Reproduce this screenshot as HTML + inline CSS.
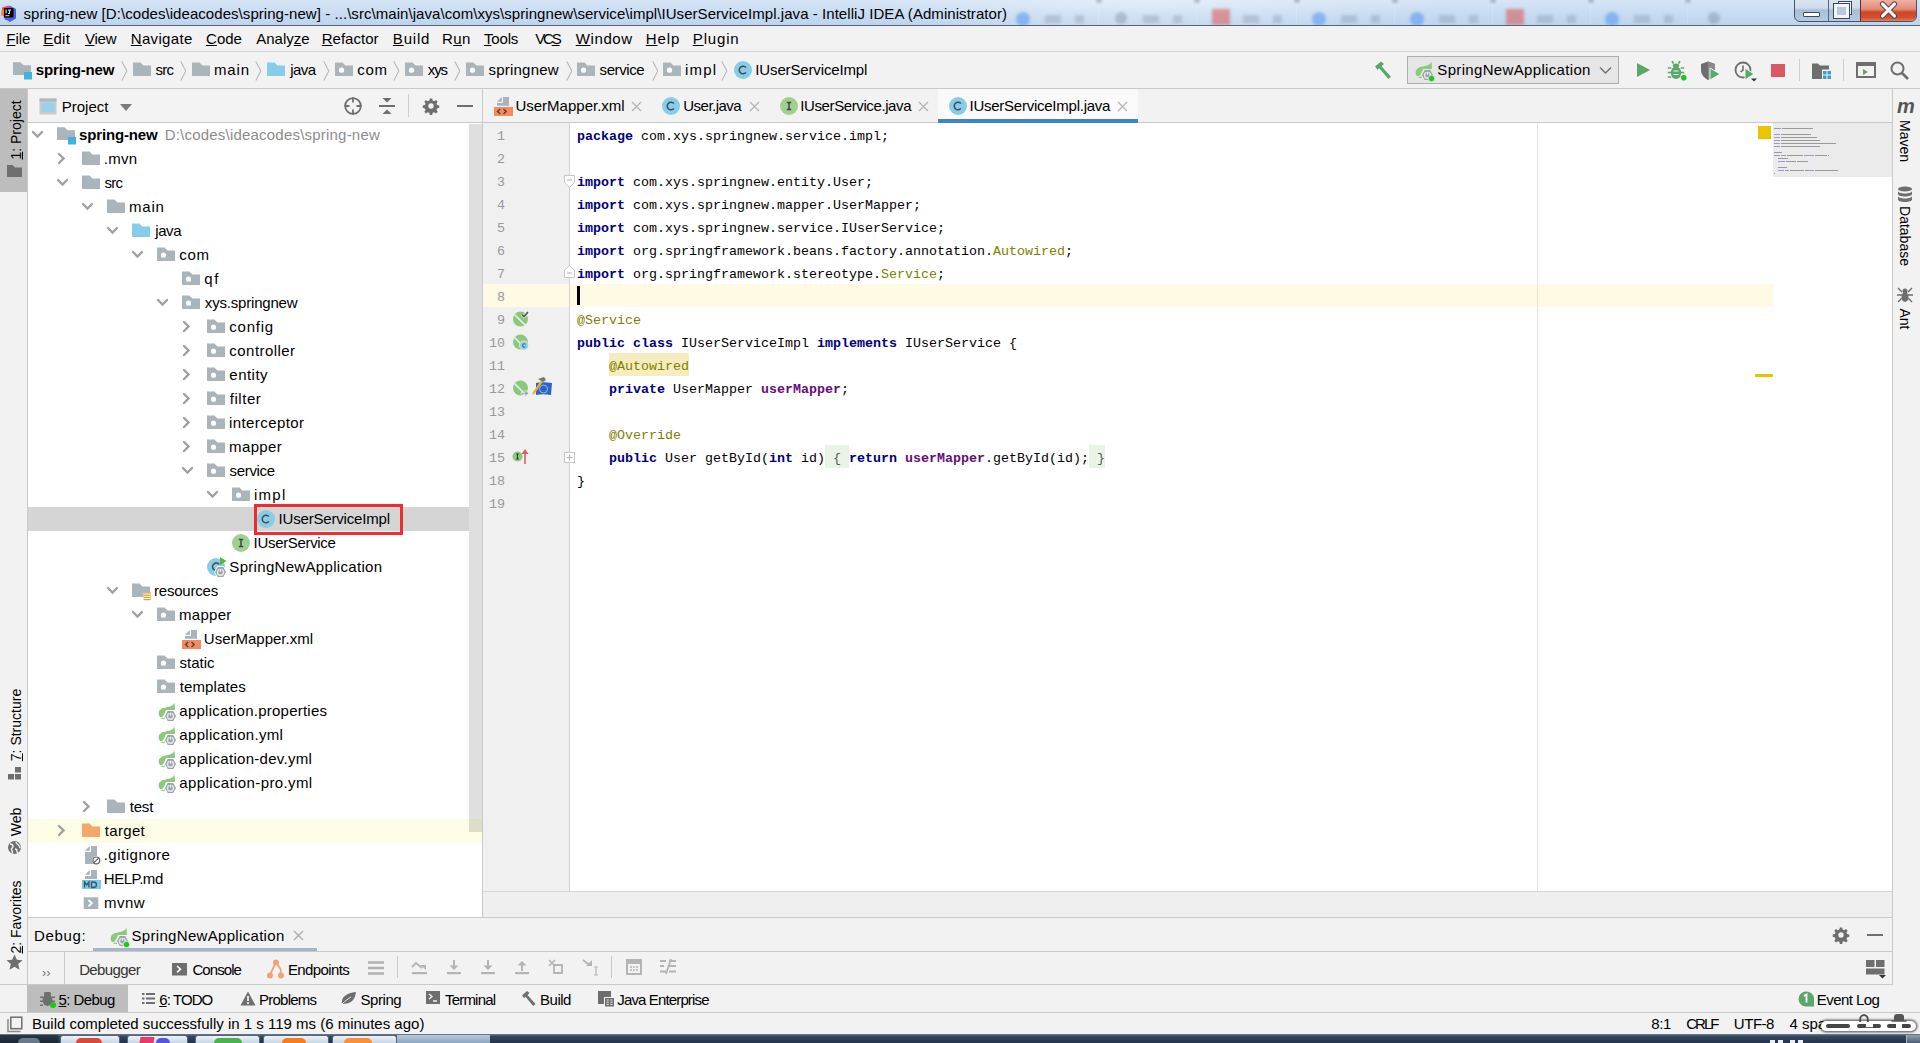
<!DOCTYPE html>
<html><head><meta charset="utf-8">
<style>
*{margin:0;padding:0;box-sizing:border-box}
html,body{width:1920px;height:1043px;overflow:hidden;background:#f2f2f2;font-family:"Liberation Sans",sans-serif;font-size:15px;color:#000;position:relative}
.a{position:absolute}
.t{position:absolute;white-space:pre;line-height:15px}
u{text-decoration:underline;text-underline-offset:1px}
.code{font-family:"Liberation Mono",monospace;font-size:13.34px;color:#000}
.kw{color:#000080;font-weight:bold}
.an{color:#808000}
.fd{color:#660e7a;font-weight:bold}
.ln{color:#999;font-family:"Liberation Mono",monospace;font-size:13.34px}
svg{overflow:visible}
</style></head><body>
<div class="a" style="left:0px;top:0px;width:1920px;height:25px;background:linear-gradient(180deg,#d6e5f6 0%,#c9dcf2 50%,#bed4ee 100%);"></div>
<div class="a" style="left:0px;top:0px;width:1920px;height:25px;background:radial-gradient(ellipse 300px 40px at 1150px 0px, rgba(255,255,255,0.35), rgba(255,255,255,0));"></div>
<div class="a" style="left:1016px;top:12px;width:14px;height:14px;background:rgba(80,150,240,0.55);border-radius:7px;filter:blur(1.5px)"></div>
<div class="a" style="left:1045px;top:15px;width:16px;height:8px;background:rgba(110,125,145,0.28);filter:blur(1.5px)"></div>
<div class="a" style="left:1075px;top:15px;width:9px;height:8px;background:rgba(110,125,145,0.28);filter:blur(1.5px)"></div>
<div class="a" style="left:1098px;top:0px;width:1px;height:25px;background:rgba(255,255,255,0.15);"></div>
<div class="a" style="left:1096px;top:-2px;width:6px;height:5px;background:rgba(90,100,120,0.35);border-radius:3px;filter:blur(1px)"></div>
<div class="a" style="left:1115px;top:12px;width:12px;height:12px;background:rgba(110,120,135,0.35);border-radius:6px;filter:blur(1.5px)"></div>
<div class="a" style="left:1143px;top:15px;width:16px;height:8px;background:rgba(110,125,145,0.28);filter:blur(1.5px)"></div>
<div class="a" style="left:1173px;top:15px;width:9px;height:8px;background:rgba(110,125,145,0.28);filter:blur(1.5px)"></div>
<div class="a" style="left:1196px;top:0px;width:1px;height:25px;background:rgba(255,255,255,0.15);"></div>
<div class="a" style="left:1194px;top:-2px;width:6px;height:5px;background:rgba(90,100,120,0.35);border-radius:3px;filter:blur(1px)"></div>
<div class="a" style="left:1212px;top:9px;width:18px;height:16px;background:rgba(215,95,95,0.6);filter:blur(1.5px)"></div>
<div class="a" style="left:1243px;top:15px;width:16px;height:8px;background:rgba(110,125,145,0.28);filter:blur(1.5px)"></div>
<div class="a" style="left:1273px;top:15px;width:9px;height:8px;background:rgba(110,125,145,0.28);filter:blur(1.5px)"></div>
<div class="a" style="left:1296px;top:0px;width:1px;height:25px;background:rgba(255,255,255,0.15);"></div>
<div class="a" style="left:1294px;top:-2px;width:6px;height:5px;background:rgba(90,100,120,0.35);border-radius:3px;filter:blur(1px)"></div>
<div class="a" style="left:1312px;top:12px;width:14px;height:14px;background:rgba(80,150,240,0.55);border-radius:7px;filter:blur(1.5px)"></div>
<div class="a" style="left:1341px;top:15px;width:16px;height:8px;background:rgba(110,125,145,0.28);filter:blur(1.5px)"></div>
<div class="a" style="left:1371px;top:15px;width:9px;height:8px;background:rgba(110,125,145,0.28);filter:blur(1.5px)"></div>
<div class="a" style="left:1394px;top:0px;width:1px;height:25px;background:rgba(255,255,255,0.15);"></div>
<div class="a" style="left:1392px;top:-2px;width:6px;height:5px;background:rgba(90,100,120,0.35);border-radius:3px;filter:blur(1px)"></div>
<div class="a" style="left:1410px;top:12px;width:14px;height:14px;background:rgba(80,150,240,0.55);border-radius:7px;filter:blur(1.5px)"></div>
<div class="a" style="left:1439px;top:15px;width:16px;height:8px;background:rgba(110,125,145,0.28);filter:blur(1.5px)"></div>
<div class="a" style="left:1469px;top:15px;width:9px;height:8px;background:rgba(110,125,145,0.28);filter:blur(1.5px)"></div>
<div class="a" style="left:1492px;top:0px;width:1px;height:25px;background:rgba(255,255,255,0.15);"></div>
<div class="a" style="left:1490px;top:-2px;width:6px;height:5px;background:rgba(90,100,120,0.35);border-radius:3px;filter:blur(1px)"></div>
<div class="a" style="left:1506px;top:9px;width:18px;height:16px;background:rgba(215,95,95,0.6);filter:blur(1.5px)"></div>
<div class="a" style="left:1537px;top:15px;width:16px;height:8px;background:rgba(110,125,145,0.28);filter:blur(1.5px)"></div>
<div class="a" style="left:1567px;top:15px;width:9px;height:8px;background:rgba(110,125,145,0.28);filter:blur(1.5px)"></div>
<div class="a" style="left:1590px;top:0px;width:1px;height:25px;background:rgba(255,255,255,0.15);"></div>
<div class="a" style="left:1588px;top:-2px;width:6px;height:5px;background:rgba(90,100,120,0.35);border-radius:3px;filter:blur(1px)"></div>
<div class="a" style="left:1605px;top:12px;width:14px;height:14px;background:rgba(80,150,240,0.55);border-radius:7px;filter:blur(1.5px)"></div>
<div class="a" style="left:1634px;top:15px;width:16px;height:8px;background:rgba(110,125,145,0.28);filter:blur(1.5px)"></div>
<div class="a" style="left:1664px;top:15px;width:9px;height:8px;background:rgba(110,125,145,0.28);filter:blur(1.5px)"></div>
<div class="a" style="left:1687px;top:0px;width:1px;height:25px;background:rgba(255,255,255,0.15);"></div>
<div class="a" style="left:1685px;top:-2px;width:6px;height:5px;background:rgba(90,100,120,0.35);border-radius:3px;filter:blur(1px)"></div>
<div class="a" style="left:1708px;top:12px;width:12px;height:12px;background:rgba(110,120,135,0.35);border-radius:6px;filter:blur(1.5px)"></div>
<div class="a" style="left:0px;top:25px;width:1920px;height:1px;background:#56667a;"></div>
<svg class="a" style="left:0px;top:4px" width="18" height="18" viewBox="0 0 18 18" ><path d="M2 3.5L8.5 1.5 10.5 7H2z" fill="#fe3f62"/><path d="M1.2 6.5H5v5H1.2z" fill="#f98a2a"/><path d="M2.5 10l8 5.5-5.5 0.5z" fill="#c24ae0"/><path d="M9.5 1.5l6.5 3.5v9.5l-6 3.5-5-3z" fill="#4e62e6"/><rect x="4" y="4" width="9.5" height="9.5" fill="#000"/><path d="M5.5 5.5h1.2v4h-1.2zM8 5.5h3v1.2h-1v3.2h-2v-1h1v-2.2h-1z" fill="#d0d0d0"/><rect x="5.3" y="11.2" width="4" height="1" fill="#ddd"/></svg>
<div class="t" style="left:23.48px;top:6px;letter-spacing:0.056px">spring-new [D:\codes\ideacodes\spring-new] - ...\src\main\java\com\xys\springnew\service\impl\IUserServiceImpl.java - IntelliJ IDEA (Administrator)</div>
<div class="a" style="left:1794px;top:-2px;width:123px;height:24px;border:1px solid #45546a;border-radius:0 0 6px 6px;overflow:hidden;background:linear-gradient(#dae5f2 0%,#cfdcec 40%,#a9bdd6 52%,#b9cbe0 100%)"><div class="a" style="left:33px;top:0;width:1px;height:24px;background:#55657a"></div><div class="a" style="left:65px;top:0;width:57px;height:24px;background:linear-gradient(#f0b3a8 0%,#e48c79 42%,#cf4526 55%,#d4512f 78%,#e9977f 100%);border-left:1px solid #6b2a1e"></div></div>
<div class="a" style="left:1803px;top:12px;width:17px;height:5px;background:#fff;border:1px solid #3a4a5e;border-radius:1px"></div>
<div class="a" style="left:1838px;top:1px;width:14px;height:14px;background:transparent;border:3px solid #f4f4f4;outline:1px solid #3a4a5e;outline-offset:-1px"></div>
<div class="a" style="left:1834px;top:4px;width:15px;height:14px;background:#b9c9dc;border:3px solid #f4f4f4;box-shadow:0 0 0 1px #3a4a5e"></div>
<svg class="a" style="left:1880px;top:2px" width="17" height="16" viewBox="0 0 17 16" ><path d="M2.5 2l12 12M14.5 2l-12 12" stroke="#45383a" stroke-width="5.2" stroke-linecap="round"/><path d="M2.5 2l12 12M14.5 2l-12 12" stroke="#f2f2f2" stroke-width="3.2" stroke-linecap="round"/></svg>
<div class="a" style="left:0px;top:26px;width:1920px;height:25px;background:#f2f2f2;"></div>
<div class="a" style="left:0px;top:51px;width:1920px;height:1px;background:#d6d6d6;"></div>
<div class="t" style="left:6.27px;top:31px"><u>F</u>ile</div>
<div class="t" style="left:43.27px;top:31px;letter-spacing:0.231px"><u>E</u>dit</div>
<div class="t" style="left:84.93px;top:31px;letter-spacing:-0.228px"><u>V</u>iew</div>
<div class="t" style="left:130.77px;top:31px;letter-spacing:0.328px"><u>N</u>avigate</div>
<div class="t" style="left:206.04px;top:31px"><u>C</u>ode</div>
<div class="t" style="left:256.27px;top:31px">Analy<u>z</u>e</div>
<div class="t" style="left:321.77px;top:31px"><u>R</u>efactor</div>
<div class="t" style="left:392.87px;top:31px;letter-spacing:0.786px"><u>B</u>uild</div>
<div class="t" style="left:441.97px;top:31px;letter-spacing:0.394px">R<u>u</u>n</div>
<div class="t" style="left:484.06px;top:31px;letter-spacing:-0.200px"><u>T</u>ools</div>
<div class="t" style="left:535.13px;top:31px;letter-spacing:-2.144px">VC<u>S</u></div>
<div class="t" style="left:575.73px;top:31px;letter-spacing:0.616px"><u>W</u>indow</div>
<div class="t" style="left:645.77px;top:31px;letter-spacing:0.904px"><u>H</u>elp</div>
<div class="t" style="left:692.77px;top:31px;letter-spacing:0.842px"><u>P</u>lugin</div>
<div class="a" style="left:0px;top:52px;width:1920px;height:36px;background:#f2f2f2;"></div>
<div class="a" style="left:0px;top:88px;width:1920px;height:1px;background:#c9c9c9;"></div>
<svg class="a" style="left:13px;top:62px" width="19" height="18" viewBox="0 0 19 18" ><path d="M0 0.5h7.5l3 3h7.5v9.5h-7v-3.5h-0v3.5h-11z" fill="#aab4bb"/><path d="M0 0.5h7.5l3 3h7.5v6.5h-7.5v3h-10.5z" fill="#aab4bb"/><rect x="11" y="10" width="8" height="7.5" fill="#3fb3e0"/></svg>
<div class="t" style="left:35.87px;top:62px;font-weight:bold;letter-spacing:-0.156px">spring-new</div>
<svg class="a" style="left:121px;top:61px" width="7" height="20" viewBox="0 0 7 20" ><path d="M0.8 0.5l5 9.5-5 9.5" stroke="#b4b8bb" stroke-width="1.1" fill="none"/></svg>
<svg class="a" style="left:133px;top:62px" width="18" height="14" viewBox="0 0 18 14" ><path d="M0 0.5h7.5l3 3h7.5v10.5h-18z" fill="#aab4bb"/></svg>
<div class="t" style="left:155.58px;top:62px;letter-spacing:-0.741px">src</div>
<svg class="a" style="left:180px;top:61px" width="7" height="20" viewBox="0 0 7 20" ><path d="M0.8 0.5l5 9.5-5 9.5" stroke="#b4b8bb" stroke-width="1.1" fill="none"/></svg>
<svg class="a" style="left:192px;top:62px" width="18" height="14" viewBox="0 0 18 14" ><path d="M0 0.5h7.5l3 3h7.5v10.5h-18z" fill="#aab4bb"/></svg>
<div class="t" style="left:214.00px;top:62px;letter-spacing:0.819px">main</div>
<svg class="a" style="left:255px;top:61px" width="7" height="20" viewBox="0 0 7 20" ><path d="M0.8 0.5l5 9.5-5 9.5" stroke="#b4b8bb" stroke-width="1.1" fill="none"/></svg>
<svg class="a" style="left:267px;top:62px" width="18" height="14" viewBox="0 0 18 14" ><path d="M0 0.5h7.5l3 3h7.5v10.5h-18z" fill="#86cde9"/></svg>
<div class="t" style="left:290.37px;top:62px;letter-spacing:-0.628px">java</div>
<svg class="a" style="left:323px;top:61px" width="7" height="20" viewBox="0 0 7 20" ><path d="M0.8 0.5l5 9.5-5 9.5" stroke="#b4b8bb" stroke-width="1.1" fill="none"/></svg>
<svg class="a" style="left:335px;top:62px" width="18" height="14" viewBox="0 0 18 14" ><path d="M0 0.5h7.5l3 3h7.5v10.5h-18z" fill="#aab4bb"/><circle cx="6.5" cy="8.2" r="2.6" fill="#fff"/></svg>
<div class="t" style="left:357.36px;top:62px;letter-spacing:0.644px">com</div>
<svg class="a" style="left:393px;top:61px" width="7" height="20" viewBox="0 0 7 20" ><path d="M0.8 0.5l5 9.5-5 9.5" stroke="#b4b8bb" stroke-width="1.1" fill="none"/></svg>
<svg class="a" style="left:405px;top:62px" width="18" height="14" viewBox="0 0 18 14" ><path d="M0 0.5h7.5l3 3h7.5v10.5h-18z" fill="#aab4bb"/><circle cx="6.5" cy="8.2" r="2.6" fill="#fff"/></svg>
<div class="t" style="left:427.83px;top:62px;letter-spacing:-1.145px">xys</div>
<svg class="a" style="left:454px;top:61px" width="7" height="20" viewBox="0 0 7 20" ><path d="M0.8 0.5l5 9.5-5 9.5" stroke="#b4b8bb" stroke-width="1.1" fill="none"/></svg>
<svg class="a" style="left:466px;top:62px" width="18" height="14" viewBox="0 0 18 14" ><path d="M0 0.5h7.5l3 3h7.5v10.5h-18z" fill="#aab4bb"/><circle cx="6.5" cy="8.2" r="2.6" fill="#fff"/></svg>
<div class="t" style="left:488.58px;top:62px;letter-spacing:0.201px">springnew</div>
<svg class="a" style="left:566px;top:61px" width="7" height="20" viewBox="0 0 7 20" ><path d="M0.8 0.5l5 9.5-5 9.5" stroke="#b4b8bb" stroke-width="1.1" fill="none"/></svg>
<svg class="a" style="left:577px;top:62px" width="18" height="14" viewBox="0 0 18 14" ><path d="M0 0.5h7.5l3 3h7.5v10.5h-18z" fill="#aab4bb"/><circle cx="6.5" cy="8.2" r="2.6" fill="#fff"/></svg>
<div class="t" style="left:599.58px;top:62px;letter-spacing:-0.405px">service</div>
<svg class="a" style="left:652px;top:61px" width="7" height="20" viewBox="0 0 7 20" ><path d="M0.8 0.5l5 9.5-5 9.5" stroke="#b4b8bb" stroke-width="1.1" fill="none"/></svg>
<svg class="a" style="left:663px;top:62px" width="18" height="14" viewBox="0 0 18 14" ><path d="M0 0.5h7.5l3 3h7.5v10.5h-18z" fill="#aab4bb"/><circle cx="6.5" cy="8.2" r="2.6" fill="#fff"/></svg>
<div class="t" style="left:685.00px;top:62px;letter-spacing:1.168px">impl</div>
<svg class="a" style="left:721px;top:61px" width="7" height="20" viewBox="0 0 7 20" ><path d="M0.8 0.5l5 9.5-5 9.5" stroke="#b4b8bb" stroke-width="1.1" fill="none"/></svg>
<svg class="a" style="left:734px;top:61px" width="18" height="18" viewBox="0 0 18 18" ><circle cx="9.0" cy="9.0" r="9.0" fill="#87cde8"/><path d="M11.9 6.5a3.8 3.8 0 1 0 0 5" stroke="#3b4a55" stroke-width="1.5" fill="none"/></svg>
<div class="t" style="left:755.32px;top:62px;letter-spacing:-0.140px">IUserServiceImpl</div>
<svg class="a" style="left:1372px;top:60px" width="22" height="22" viewBox="0 0 22 22" ><path d="M3 6.5l6-5 3 2.5-2.5 2.2 9.5 10.5-2.6 2.3-9.2-10.8-1.7 1.5z" fill="#59a869"/></svg>
<div class="a" style="left:1407px;top:56px;width:212px;height:28px;background:#e6e6e6;border:1px solid #adadad"></div>
<svg class="a" style="left:1414px;top:61px" width="22" height="21" viewBox="0 0 22 21" ><path d="M2 13.5C0.5 9 4 6 9 5.5L13 4.5C15 3.8 16.5 2.5 17.5 1L18 8H9C8 10 7.5 13 5.5 14.5 4 15.5 2.5 15 2 13.5z" fill="#8cc97c"/><path d="M4.5 16.3h3.5" stroke="#8cc97c" stroke-width="1.2"/><path d="M7.00 14.00L10.25 8.00H16.75L20.00 14.00L16.75 20.00H10.25z" fill="#e6e6e6"/><path d="M8.00 14.00L10.75 9.00H16.25L19.00 14.00L16.25 19.00H10.75z" fill="#9aa5ad"/><circle cx="13.5" cy="14.3" r="2.97" fill="none" stroke="#e8ecef" stroke-width="1.3"/><path d="M13.5 10.03v4.17" stroke="#9aa5ad" stroke-width="1.8"/><path d="M13.5 10.83v2.97" stroke="#e8ecef" stroke-width="1.2"/><circle cx="17.5" cy="17.5" r="3.2" fill="#18c918" stroke="#e6e6e6" stroke-width="0.8"/></svg>
<div class="t" style="left:1437.32px;top:62px;letter-spacing:0.337px">SpringNewApplication</div>
<svg class="a" style="left:1599px;top:66px" width="13" height="9" viewBox="0 0 13 9" ><path d="M1 1.5l5.5 5.5 5.5-5.5" stroke="#6e6e6e" stroke-width="1.3" fill="none"/></svg>
<svg class="a" style="left:1636px;top:62px" width="15" height="16" viewBox="0 0 15 16" ><path d="M1 1v14l13-7z" fill="#59a869"/></svg>
<svg class="a" style="left:1666px;top:60px" width="22" height="22" viewBox="0 0 22 22" ><g fill="#59a869"><ellipse cx="10" cy="12.8" rx="5.2" ry="6.2"/><ellipse cx="10" cy="5.6" rx="3.2" ry="2.2"/></g><path d="M7.5 3.5L6 1.2M12.5 3.5L14 1.2M1.8 8h3.5M1.8 12.5h3.5M1.8 17h3.5M14.7 8h3.5M14.7 12.5h3.5M14.7 17h3.5" stroke="#59a869" stroke-width="1.7"/><path d="M7.5 11h5M7.5 14.5h5" stroke="#f2f2f2" stroke-width="1.2"/><circle cx="17.8" cy="17.8" r="2.8" fill="#18c918"/></svg>
<svg class="a" style="left:1700px;top:61px" width="22" height="20" viewBox="0 0 22 20" ><path d="M1 3l7-2.5 7 2.5v6c0 5-3.5 8-7 10-3.5-2-7-5-7-10z" fill="#6e6e6e"/><path d="M8 2v16" stroke="#f2f2f2" stroke-width="0"/><path d="M8 0.5l7 2.5v6c0 5-3.5 8-7 10z" fill="#8a8a8a"/><path d="M10 7v12l10-6z" fill="#59a869" stroke="#f2f2f2" stroke-width="1"/></svg>
<svg class="a" style="left:1734px;top:61px" width="24" height="22" viewBox="0 0 24 22" ><circle cx="9" cy="9" r="7.5" fill="none" stroke="#6e6e6e" stroke-width="1.8"/><path d="M9 4.5v4.5l-2.5 2" stroke="#6e6e6e" stroke-width="1.6" fill="none"/><path d="M11 7v12l9-6z" fill="#59a869" stroke="#f2f2f2" stroke-width="1"/><path d="M17 17.5h6l-3 3z" fill="#333"/></svg>
<div class="a" style="left:1771px;top:64px;width:14px;height:13px;background:#db5860;"></div>
<div class="a" style="left:1799px;top:59px;width:1px;height:22px;background:#cdcdcd;"></div>
<svg class="a" style="left:1812px;top:63px" width="20" height="17" viewBox="0 0 20 17" ><path d="M0 0.5h6l2 2h9v4h-7v9.5h-10z" fill="#6e6e6e"/><rect x="11" y="8" width="3.5" height="3.5" fill="#389fd6"/><rect x="15.5" y="8" width="3.5" height="3.5" fill="#389fd6"/><rect x="11" y="12.5" width="3.5" height="3.5" fill="#389fd6"/><rect x="15.5" y="12.5" width="3.5" height="3.5" fill="#389fd6"/></svg>
<div class="a" style="left:1843px;top:59px;width:1px;height:22px;background:#cdcdcd;"></div>
<svg class="a" style="left:1856px;top:62px" width="20" height="16" viewBox="0 0 20 16" ><rect x="1" y="1" width="18" height="14" fill="none" stroke="#6e6e6e" stroke-width="2"/><rect x="1" y="1" width="18" height="3" fill="#6e6e6e"/><path d="M7 7v6l5-3z" fill="#59a869"/></svg>
<svg class="a" style="left:1890px;top:61px" width="20" height="19" viewBox="0 0 20 19" ><circle cx="7.5" cy="7.5" r="6" fill="none" stroke="#6e6e6e" stroke-width="2"/><path d="M12 12l6 6" stroke="#6e6e6e" stroke-width="2.6"/></svg>
<div class="a" style="left:0px;top:89px;width:27px;height:896px;background:#f2f2f2;"></div>
<div class="a" style="left:27px;top:89px;width:1px;height:896px;background:#c9c9c9;"></div>
<div class="a" style="left:0px;top:89px;width:27px;height:103px;background:#bdbdbd;"></div>
<div class="a" style="left:15.5px;top:129.5px;width:0;height:0"><div class="t" style="left:0;top:0;font-size:14px;transform:translate(-50%,-50%) rotate(-90deg);line-height:14px"><u>1</u>: Project</div></div>
<svg class="a" style="left:7px;top:165px" width="15" height="12" viewBox="0 0 15 12" ><path d="M0 0h5.5l2.5 2.5h7v9.5h-15z" fill="#6e6e6e"/></svg>
<div class="a" style="left:15.5px;top:725.0px;width:0;height:0"><div class="t" style="left:0;top:0;font-size:14px;transform:translate(-50%,-50%) rotate(-90deg);line-height:14px"><u>7</u>: Structure</div></div>
<svg class="a" style="left:7px;top:767px" width="15" height="13" viewBox="0 0 15 13" ><rect x="8" y="0" width="6" height="5.5" fill="#6e6e6e"/><rect x="1" y="7" width="6" height="5.5" fill="#6e6e6e"/><rect x="8" y="7" width="6" height="5.5" fill="#6e6e6e"/></svg>
<div class="a" style="left:15.5px;top:821.5px;width:0;height:0"><div class="t" style="left:0;top:0;font-size:14px;transform:translate(-50%,-50%) rotate(-90deg);line-height:14px">Web</div></div>
<svg class="a" style="left:7px;top:840px" width="15" height="15" viewBox="0 0 15 15" ><circle cx="7.5" cy="7.5" r="6.5" fill="#6e6e6e"/><path d="M3 4c2 0 3 1 3 2.5s-2 1.5-1.5 3 1.5 2 1 4M9 2c0 2 1.5 2 2.5 3s1 2.5 2 3M8 9c1 0 2 1 2 2.5s1 1 1.5 2" stroke="#f2f2f2" stroke-width="1.4" fill="none"/></svg>
<div class="a" style="left:15.5px;top:916.5px;width:0;height:0"><div class="t" style="left:0;top:0;font-size:14px;transform:translate(-50%,-50%) rotate(-90deg);line-height:14px"><u>2</u>: Favorites</div></div>
<svg class="a" style="left:6px;top:954px" width="17" height="17" viewBox="0 0 17 17" ><path d="M8.5 0.5l2.4 5.3 5.6 0.5-4.3 3.8 1.3 5.6-5-3-5 3 1.3-5.6-4.3-3.8 5.6-0.5z" fill="#6e6e6e"/></svg>
<div class="a" style="left:1892px;top:89px;width:1px;height:896px;background:#c9c9c9;"></div>
<div class="a" style="left:1893px;top:89px;width:27px;height:896px;background:#f2f2f2;"></div>
<div class="t" style="left:1897px;top:99px;font-size:20px;font-weight:bold;font-style:italic;color:#555;letter-spacing:-1px">m</div>
<div class="a" style="left:1905px;top:141.0px;width:0;height:0"><div class="t" style="left:0;top:0;font-size:14px;transform:translate(-50%,-50%) rotate(90deg);line-height:14px">Maven</div></div>
<svg class="a" style="left:1897px;top:186px" width="16" height="17" viewBox="0 0 16 17" ><g fill="#6e6e6e"><ellipse cx="8" cy="3" rx="7" ry="2.5"/><path d="M1 5c0 1.5 3 2.5 7 2.5s7-1 7-2.5v3c0 1.5-3 2.5-7 2.5s-7-1-7-2.5zM1 10c0 1.5 3 2.5 7 2.5s7-1 7-2.5v3.5c0 1.5-3 2.5-7 2.5s-7-1-7-2.5z"/></g></svg>
<div class="a" style="left:1905px;top:235.5px;width:0;height:0"><div class="t" style="left:0;top:0;font-size:14px;transform:translate(-50%,-50%) rotate(90deg);line-height:14px">Database</div></div>
<svg class="a" style="left:1897px;top:286px" width="16" height="18" viewBox="0 0 16 18" ><g stroke="#6e6e6e" stroke-width="1.4" fill="none"><path d="M1 2l4 4M15 2l-4 4M0 9h5M11 9h5M1 16l4-4M15 16l-4-4"/></g><ellipse cx="8" cy="5" rx="2.5" ry="2.5" fill="#6e6e6e"/><ellipse cx="8" cy="11" rx="3.5" ry="5" fill="#6e6e6e"/></svg>
<div class="a" style="left:1905px;top:318.5px;width:0;height:0"><div class="t" style="left:0;top:0;font-size:14px;transform:translate(-50%,-50%) rotate(90deg);line-height:14px">Ant</div></div>
<div class="a" style="left:28px;top:89px;width:454px;height:33px;background:#f3f3f3;"></div>
<div class="a" style="left:28px;top:122px;width:454px;height:1px;background:#c9c9c9;"></div>
<div class="a" style="left:482px;top:89px;width:1px;height:829px;background:#c9c9c9;"></div>
<svg class="a" style="left:39px;top:98px" width="18" height="17" viewBox="0 0 18 17" ><rect x="0.5" y="0.5" width="17" height="16" fill="#c4cbd1"/><rect x="0.5" y="0.5" width="17" height="3" fill="#aeb8bf"/><rect x="3" y="5" width="12" height="9" fill="#97d4ec"/></svg>
<div class="t" style="left:61.77px;top:99px">Project</div>
<svg class="a" style="left:120px;top:104px" width="12" height="7" viewBox="0 0 12 7" ><path d="M0 0h12l-6 7z" fill="#7a7a7a"/></svg>
<svg class="a" style="left:343px;top:96px" width="20" height="20" viewBox="0 0 20 20" ><circle cx="10" cy="10" r="7.8" fill="none" stroke="#6e6e6e" stroke-width="1.8"/><path d="M10 1.5v5M10 13.5v5M1.5 10h5M13.5 10h5" stroke="#6e6e6e" stroke-width="1.8"/></svg>
<svg class="a" style="left:378px;top:97px" width="18" height="18" viewBox="0 0 18 18" ><path d="M4.5 1h9l-4.5 4.5z" fill="#6e6e6e"/><rect x="1" y="8" width="16" height="2" fill="#6e6e6e"/><path d="M4.5 17h9l-4.5-4.5z" fill="#6e6e6e"/></svg>
<div class="a" style="left:408px;top:94px;width:1px;height:23px;background:#cdcdcd;"></div>
<svg class="a" style="left:423px;top:98px" width="16" height="16" viewBox="0 0 18 18" ><path d="M9 0.5l1.3 0 .6 2.4 1.7.7 2.1-1.3 1.8 1.8-1.3 2.1.7 1.7 2.4.6v2.6l-2.4.6-.7 1.7 1.3 2.1-1.8 1.8-2.1-1.3-1.7.7-.6 2.4h-2.6l-.6-2.4-1.7-.7-2.1 1.3-1.8-1.8 1.3-2.1-.7-1.7-2.4-.6v-2.6l2.4-.6.7-1.7-1.3-2.1 1.8-1.8 2.1 1.3 1.7-.7.6-2.4z" fill="#6e6e6e"/><circle cx="9" cy="9" r="3" fill="#f3f3f3"/></svg>
<div class="a" style="left:457px;top:105px;width:16px;height:2px;background:#6e6e6e;"></div>
<div class="a" style="left:28px;top:123px;width:454px;height:794px;background:#fff;"></div>
<svg class="a" style="left:32.3px;top:130.5px" width="12" height="8" viewBox="0 0 12 8" ><path d="M1 1l4.5 4.5 4.5-4.5" stroke="#a0a0a0" stroke-width="2.4" fill="none" stroke-linecap="round"/></svg>
<svg class="a" style="left:57px;top:127px" width="19" height="18" viewBox="0 0 19 18" ><path d="M0 0.5h7.5l3 3h7.5v9.5h-7v-3.5h-0v3.5h-11z" fill="#aab4bb"/><path d="M0 0.5h7.5l3 3h7.5v6.5h-7.5v3h-10.5z" fill="#aab4bb"/><rect x="11" y="10" width="8" height="7.5" fill="#3fb3e0"/></svg>
<div class="t" style="left:79.07px;top:127px;font-weight:bold;letter-spacing:-0.156px">spring-new</div>
<div class="t" style="left:164.67px;top:127px;color:#8c8c8c;letter-spacing:0.208px">D:\codes\ideacodes\spring-new</div>
<svg class="a" style="left:58px;top:152.8px" width="8" height="12" viewBox="0 0 8 12" ><path d="M1 1l4.5 4.5-4.5 4.5" stroke="#a0a0a0" stroke-width="2.4" fill="none" stroke-linecap="round"/></svg>
<svg class="a" style="left:82px;top:151px" width="18" height="14" viewBox="0 0 18 14" ><path d="M0 0.5h7.5l3 3h7.5v10.5h-18z" fill="#aab4bb"/></svg>
<div class="t" style="left:103.63px;top:151px;letter-spacing:0.346px">.mvn</div>
<svg class="a" style="left:57.3px;top:178.5px" width="12" height="8" viewBox="0 0 12 8" ><path d="M1 1l4.5 4.5 4.5-4.5" stroke="#a0a0a0" stroke-width="2.4" fill="none" stroke-linecap="round"/></svg>
<svg class="a" style="left:82px;top:175px" width="18" height="14" viewBox="0 0 18 14" ><path d="M0 0.5h7.5l3 3h7.5v10.5h-18z" fill="#aab4bb"/></svg>
<div class="t" style="left:104.58px;top:175px;letter-spacing:-0.791px">src</div>
<svg class="a" style="left:82.3px;top:202.5px" width="12" height="8" viewBox="0 0 12 8" ><path d="M1 1l4.5 4.5 4.5-4.5" stroke="#a0a0a0" stroke-width="2.4" fill="none" stroke-linecap="round"/></svg>
<svg class="a" style="left:107px;top:199px" width="18" height="14" viewBox="0 0 18 14" ><path d="M0 0.5h7.5l3 3h7.5v10.5h-18z" fill="#aab4bb"/></svg>
<div class="t" style="left:129.00px;top:199px;letter-spacing:0.786px">main</div>
<svg class="a" style="left:107.3px;top:226.5px" width="12" height="8" viewBox="0 0 12 8" ><path d="M1 1l4.5 4.5 4.5-4.5" stroke="#a0a0a0" stroke-width="2.4" fill="none" stroke-linecap="round"/></svg>
<svg class="a" style="left:132px;top:223px" width="18" height="14" viewBox="0 0 18 14" ><path d="M0 0.5h7.5l3 3h7.5v10.5h-18z" fill="#86cde9"/></svg>
<div class="t" style="left:155.37px;top:223px;letter-spacing:-0.461px">java</div>
<svg class="a" style="left:132.3px;top:250.5px" width="12" height="8" viewBox="0 0 12 8" ><path d="M1 1l4.5 4.5 4.5-4.5" stroke="#a0a0a0" stroke-width="2.4" fill="none" stroke-linecap="round"/></svg>
<svg class="a" style="left:157px;top:247px" width="18" height="14" viewBox="0 0 18 14" ><path d="M0 0.5h7.5l3 3h7.5v10.5h-18z" fill="#aab4bb"/><circle cx="6.5" cy="8.2" r="2.6" fill="#fff"/></svg>
<div class="t" style="left:179.36px;top:247px;letter-spacing:0.694px">com</div>
<svg class="a" style="left:182px;top:271px" width="18" height="14" viewBox="0 0 18 14" ><path d="M0 0.5h7.5l3 3h7.5v10.5h-18z" fill="#aab4bb"/><circle cx="6.5" cy="8.2" r="2.6" fill="#fff"/></svg>
<div class="t" style="left:204.37px;top:271px;letter-spacing:1.598px">qf</div>
<svg class="a" style="left:157.3px;top:298.5px" width="12" height="8" viewBox="0 0 12 8" ><path d="M1 1l4.5 4.5 4.5-4.5" stroke="#a0a0a0" stroke-width="2.4" fill="none" stroke-linecap="round"/></svg>
<svg class="a" style="left:182px;top:295px" width="18" height="14" viewBox="0 0 18 14" ><path d="M0 0.5h7.5l3 3h7.5v10.5h-18z" fill="#aab4bb"/><circle cx="6.5" cy="8.2" r="2.6" fill="#fff"/></svg>
<div class="t" style="left:204.83px;top:295px;letter-spacing:-0.192px">xys.springnew</div>
<svg class="a" style="left:183px;top:320.8px" width="8" height="12" viewBox="0 0 8 12" ><path d="M1 1l4.5 4.5-4.5 4.5" stroke="#a0a0a0" stroke-width="2.4" fill="none" stroke-linecap="round"/></svg>
<svg class="a" style="left:207px;top:319px" width="18" height="14" viewBox="0 0 18 14" ><path d="M0 0.5h7.5l3 3h7.5v10.5h-18z" fill="#aab4bb"/><circle cx="6.5" cy="8.2" r="2.6" fill="#fff"/></svg>
<div class="t" style="left:229.36px;top:319px;letter-spacing:0.735px">config</div>
<svg class="a" style="left:183px;top:344.8px" width="8" height="12" viewBox="0 0 8 12" ><path d="M1 1l4.5 4.5-4.5 4.5" stroke="#a0a0a0" stroke-width="2.4" fill="none" stroke-linecap="round"/></svg>
<svg class="a" style="left:207px;top:343px" width="18" height="14" viewBox="0 0 18 14" ><path d="M0 0.5h7.5l3 3h7.5v10.5h-18z" fill="#aab4bb"/><circle cx="6.5" cy="8.2" r="2.6" fill="#fff"/></svg>
<div class="t" style="left:229.36px;top:343px;letter-spacing:0.444px">controller</div>
<svg class="a" style="left:183px;top:368.8px" width="8" height="12" viewBox="0 0 8 12" ><path d="M1 1l4.5 4.5-4.5 4.5" stroke="#a0a0a0" stroke-width="2.4" fill="none" stroke-linecap="round"/></svg>
<svg class="a" style="left:207px;top:367px" width="18" height="14" viewBox="0 0 18 14" ><path d="M0 0.5h7.5l3 3h7.5v10.5h-18z" fill="#aab4bb"/><circle cx="6.5" cy="8.2" r="2.6" fill="#fff"/></svg>
<div class="t" style="left:229.36px;top:367px;letter-spacing:0.463px">entity</div>
<svg class="a" style="left:183px;top:392.8px" width="8" height="12" viewBox="0 0 8 12" ><path d="M1 1l4.5 4.5-4.5 4.5" stroke="#a0a0a0" stroke-width="2.4" fill="none" stroke-linecap="round"/></svg>
<svg class="a" style="left:207px;top:391px" width="18" height="14" viewBox="0 0 18 14" ><path d="M0 0.5h7.5l3 3h7.5v10.5h-18z" fill="#aab4bb"/><circle cx="6.5" cy="8.2" r="2.6" fill="#fff"/></svg>
<div class="t" style="left:229.79px;top:391px;letter-spacing:0.545px">filter</div>
<svg class="a" style="left:183px;top:416.8px" width="8" height="12" viewBox="0 0 8 12" ><path d="M1 1l4.5 4.5-4.5 4.5" stroke="#a0a0a0" stroke-width="2.4" fill="none" stroke-linecap="round"/></svg>
<svg class="a" style="left:207px;top:415px" width="18" height="14" viewBox="0 0 18 14" ><path d="M0 0.5h7.5l3 3h7.5v10.5h-18z" fill="#aab4bb"/><circle cx="6.5" cy="8.2" r="2.6" fill="#fff"/></svg>
<div class="t" style="left:229.00px;top:415px;letter-spacing:0.418px">interceptor</div>
<svg class="a" style="left:183px;top:440.8px" width="8" height="12" viewBox="0 0 8 12" ><path d="M1 1l4.5 4.5-4.5 4.5" stroke="#a0a0a0" stroke-width="2.4" fill="none" stroke-linecap="round"/></svg>
<svg class="a" style="left:207px;top:439px" width="18" height="14" viewBox="0 0 18 14" ><path d="M0 0.5h7.5l3 3h7.5v10.5h-18z" fill="#aab4bb"/><circle cx="6.5" cy="8.2" r="2.6" fill="#fff"/></svg>
<div class="t" style="left:229.00px;top:439px;letter-spacing:0.397px">mapper</div>
<svg class="a" style="left:182.3px;top:466.5px" width="12" height="8" viewBox="0 0 12 8" ><path d="M1 1l4.5 4.5 4.5-4.5" stroke="#a0a0a0" stroke-width="2.4" fill="none" stroke-linecap="round"/></svg>
<svg class="a" style="left:207px;top:463px" width="18" height="14" viewBox="0 0 18 14" ><path d="M0 0.5h7.5l3 3h7.5v10.5h-18z" fill="#aab4bb"/><circle cx="6.5" cy="8.2" r="2.6" fill="#fff"/></svg>
<div class="t" style="left:229.58px;top:463px;letter-spacing:-0.338px">service</div>
<svg class="a" style="left:207.3px;top:490.5px" width="12" height="8" viewBox="0 0 12 8" ><path d="M1 1l4.5 4.5 4.5-4.5" stroke="#a0a0a0" stroke-width="2.4" fill="none" stroke-linecap="round"/></svg>
<svg class="a" style="left:232px;top:487px" width="18" height="14" viewBox="0 0 18 14" ><path d="M0 0.5h7.5l3 3h7.5v10.5h-18z" fill="#aab4bb"/><circle cx="6.5" cy="8.2" r="2.6" fill="#fff"/></svg>
<div class="t" style="left:254.00px;top:487px;letter-spacing:1.268px">impl</div>
<div class="a" style="left:28px;top:507px;width:441px;height:24px;background:#d5d5d5;"></div>
<svg class="a" style="left:257px;top:510px" width="18" height="18" viewBox="0 0 18 18" ><circle cx="9.0" cy="9.0" r="9.0" fill="#87cde8"/><path d="M11.9 6.5a3.8 3.8 0 1 0 0 5" stroke="#3b4a55" stroke-width="1.5" fill="none"/></svg>
<div class="t" style="left:278.62px;top:511px;letter-spacing:-0.187px">IUserServiceImpl</div>
<svg class="a" style="left:232px;top:534px" width="18" height="18" viewBox="0 0 18 18" ><circle cx="9.0" cy="9.0" r="9.0" fill="#9fd08f"/><path d="M6.8 5.4h4.4M9.0 5.4v7.2M6.8 12.6h4.4" stroke="#3b4550" stroke-width="1.5" fill="none"/></svg>
<div class="t" style="left:253.62px;top:535px;letter-spacing:-0.328px">IUserService</div>
<svg class="a" style="left:207px;top:555px" width="21" height="24" viewBox="0 0 21 24" ><circle cx="9" cy="12" r="9" fill="#87cde8"/><path d="M12.2 9.2a3.8 3.8 0 1 0 0 5" stroke="#3b4a55" stroke-width="1.5" fill="none"/><path d="M13 2l6.5 4-6.5 4z" fill="#5fb340"/><path d="M7.00 17.00L10.25 11.00H16.75L20.00 17.00L16.75 23.00H10.25z" fill="#fff"/><path d="M8.00 17.00L10.75 12.00H16.25L19.00 17.00L16.25 22.00H10.75z" fill="#9aa5ad"/><circle cx="13.5" cy="17.3" r="2.97" fill="none" stroke="#e8ecef" stroke-width="1.3"/><path d="M13.5 13.03v4.17" stroke="#9aa5ad" stroke-width="1.8"/><path d="M13.5 13.83v2.97" stroke="#e8ecef" stroke-width="1.2"/></svg>
<div class="t" style="left:229.32px;top:559px;letter-spacing:0.316px">SpringNewApplication</div>
<svg class="a" style="left:107.3px;top:586.5px" width="12" height="8" viewBox="0 0 12 8" ><path d="M1 1l4.5 4.5 4.5-4.5" stroke="#a0a0a0" stroke-width="2.4" fill="none" stroke-linecap="round"/></svg>
<svg class="a" style="left:132px;top:583px" width="19" height="18" viewBox="0 0 19 18" ><path d="M0 0.5h7.5l3 3h7.5v6h-6.5v4.5h-11.5z" fill="#aab4bb"/><rect x="11.5" y="9.3" width="7.5" height="1.3" fill="#e3a33c"/><rect x="11.5" y="11.5" width="7.5" height="1.3" fill="#e3a33c"/><rect x="11.5" y="13.7" width="7.5" height="1.3" fill="#e3a33c"/><rect x="11.5" y="15.9" width="7.5" height="1.3" fill="#e3a33c"/></svg>
<div class="t" style="left:154.00px;top:583px;letter-spacing:-0.215px">resources</div>
<svg class="a" style="left:132.3px;top:610.5px" width="12" height="8" viewBox="0 0 12 8" ><path d="M1 1l4.5 4.5 4.5-4.5" stroke="#a0a0a0" stroke-width="2.4" fill="none" stroke-linecap="round"/></svg>
<svg class="a" style="left:157px;top:607px" width="18" height="14" viewBox="0 0 18 14" ><path d="M0 0.5h7.5l3 3h7.5v10.5h-18z" fill="#aab4bb"/><circle cx="6.5" cy="8.2" r="2.6" fill="#fff"/></svg>
<div class="t" style="left:179.00px;top:607px;letter-spacing:0.297px">mapper</div>
<svg class="a" style="left:182px;top:630px" width="19" height="19" viewBox="0 0 19 19" ><path d="M9 0H15V8.7H3V6H9z" fill="#a9b3ba"/><path d="M3 4.8L7.8 0V4.8z" fill="#a9b3ba"/><rect x="0" y="10" width="19" height="9" fill="#f28c60"/><path d="M6.2 12l-2.7 2.5 2.7 2.5M9.5 12l2.7 2.5-2.7 2.5" stroke="#5a3a2a" stroke-width="1.3" fill="none"/></svg>
<div class="t" style="left:203.84px;top:631px">UserMapper.xml</div>
<svg class="a" style="left:157px;top:655px" width="18" height="14" viewBox="0 0 18 14" ><path d="M0 0.5h7.5l3 3h7.5v10.5h-18z" fill="#aab4bb"/><circle cx="6.5" cy="8.2" r="2.6" fill="#fff"/></svg>
<div class="t" style="left:179.58px;top:655px">static</div>
<svg class="a" style="left:157px;top:679px" width="18" height="14" viewBox="0 0 18 14" ><path d="M0 0.5h7.5l3 3h7.5v10.5h-18z" fill="#aab4bb"/><circle cx="6.5" cy="8.2" r="2.6" fill="#fff"/></svg>
<div class="t" style="left:179.77px;top:679px;letter-spacing:0.105px">templates</div>
<svg class="a" style="left:157px;top:702px" width="20" height="21" viewBox="0 0 20 21" ><path d="M2 13.5C0.5 9 4 6 9 5.5L13 4.5C15 3.8 16.5 2.5 17.5 1L18 8H9C8 10 7.5 13 5.5 14.5 4 15.5 2.5 15 2 13.5z" fill="#8cc97c"/><path d="M4.5 16.3h3.5" stroke="#8cc97c" stroke-width="1.2"/><path d="M7.00 14.00L10.25 8.00H16.75L20.00 14.00L16.75 20.00H10.25z" fill="#fff"/><path d="M8.00 14.00L10.75 9.00H16.25L19.00 14.00L16.25 19.00H10.75z" fill="#9aa5ad"/><circle cx="13.5" cy="14.3" r="2.97" fill="none" stroke="#e8ecef" stroke-width="1.3"/><path d="M13.5 10.03v4.17" stroke="#9aa5ad" stroke-width="1.8"/><path d="M13.5 10.83v2.97" stroke="#e8ecef" stroke-width="1.2"/></svg>
<div class="t" style="left:179.36px;top:703px;letter-spacing:0.242px">application.properties</div>
<svg class="a" style="left:157px;top:726px" width="20" height="21" viewBox="0 0 20 21" ><path d="M2 13.5C0.5 9 4 6 9 5.5L13 4.5C15 3.8 16.5 2.5 17.5 1L18 8H9C8 10 7.5 13 5.5 14.5 4 15.5 2.5 15 2 13.5z" fill="#8cc97c"/><path d="M4.5 16.3h3.5" stroke="#8cc97c" stroke-width="1.2"/><path d="M7.00 14.00L10.25 8.00H16.75L20.00 14.00L16.75 20.00H10.25z" fill="#fff"/><path d="M8.00 14.00L10.75 9.00H16.25L19.00 14.00L16.25 19.00H10.75z" fill="#9aa5ad"/><circle cx="13.5" cy="14.3" r="2.97" fill="none" stroke="#e8ecef" stroke-width="1.3"/><path d="M13.5 10.03v4.17" stroke="#9aa5ad" stroke-width="1.8"/><path d="M13.5 10.83v2.97" stroke="#e8ecef" stroke-width="1.2"/></svg>
<div class="t" style="left:179.36px;top:727px;letter-spacing:0.309px">application.yml</div>
<svg class="a" style="left:157px;top:750px" width="20" height="21" viewBox="0 0 20 21" ><path d="M2 13.5C0.5 9 4 6 9 5.5L13 4.5C15 3.8 16.5 2.5 17.5 1L18 8H9C8 10 7.5 13 5.5 14.5 4 15.5 2.5 15 2 13.5z" fill="#8cc97c"/><path d="M4.5 16.3h3.5" stroke="#8cc97c" stroke-width="1.2"/><path d="M7.00 14.00L10.25 8.00H16.75L20.00 14.00L16.75 20.00H10.25z" fill="#fff"/><path d="M8.00 14.00L10.75 9.00H16.25L19.00 14.00L16.25 19.00H10.75z" fill="#9aa5ad"/><circle cx="13.5" cy="14.3" r="2.97" fill="none" stroke="#e8ecef" stroke-width="1.3"/><path d="M13.5 10.03v4.17" stroke="#9aa5ad" stroke-width="1.8"/><path d="M13.5 10.83v2.97" stroke="#e8ecef" stroke-width="1.2"/></svg>
<div class="t" style="left:179.36px;top:751px;letter-spacing:0.292px">application-dev.yml</div>
<svg class="a" style="left:157px;top:774px" width="20" height="21" viewBox="0 0 20 21" ><path d="M2 13.5C0.5 9 4 6 9 5.5L13 4.5C15 3.8 16.5 2.5 17.5 1L18 8H9C8 10 7.5 13 5.5 14.5 4 15.5 2.5 15 2 13.5z" fill="#8cc97c"/><path d="M4.5 16.3h3.5" stroke="#8cc97c" stroke-width="1.2"/><path d="M7.00 14.00L10.25 8.00H16.75L20.00 14.00L16.75 20.00H10.25z" fill="#fff"/><path d="M8.00 14.00L10.75 9.00H16.25L19.00 14.00L16.25 19.00H10.75z" fill="#9aa5ad"/><circle cx="13.5" cy="14.3" r="2.97" fill="none" stroke="#e8ecef" stroke-width="1.3"/><path d="M13.5 10.03v4.17" stroke="#9aa5ad" stroke-width="1.8"/><path d="M13.5 10.83v2.97" stroke="#e8ecef" stroke-width="1.2"/></svg>
<div class="t" style="left:179.36px;top:775px;letter-spacing:0.386px">application-pro.yml</div>
<svg class="a" style="left:83px;top:800.8px" width="8" height="12" viewBox="0 0 8 12" ><path d="M1 1l4.5 4.5-4.5 4.5" stroke="#a0a0a0" stroke-width="2.4" fill="none" stroke-linecap="round"/></svg>
<svg class="a" style="left:107px;top:799px" width="18" height="14" viewBox="0 0 18 14" ><path d="M0 0.5h7.5l3 3h7.5v10.5h-18z" fill="#aab4bb"/></svg>
<div class="t" style="left:129.77px;top:799px;letter-spacing:-0.213px">test</div>
<div class="a" style="left:28px;top:819px;width:454px;height:24px;background:#fdfde5;"></div>
<svg class="a" style="left:58px;top:824.8px" width="8" height="12" viewBox="0 0 8 12" ><path d="M1 1l4.5 4.5-4.5 4.5" stroke="#a0a0a0" stroke-width="2.4" fill="none" stroke-linecap="round"/></svg>
<svg class="a" style="left:82px;top:823px" width="18" height="14" viewBox="0 0 18 14" ><path d="M0 0.5h7.5l3 3h7.5v10.5h-18z" fill="#f5a66b"/></svg>
<div class="t" style="left:104.77px;top:823px;letter-spacing:0.316px">target</div>
<svg class="a" style="left:84px;top:846px" width="17" height="20" viewBox="0 0 17 20" ><path d="M7 0H13V18H1V6H7z" fill="#a9b3ba"/><path d="M1 4.8L5.8 0V4.8z" fill="#a9b3ba"/><circle cx="12.3" cy="14.4" r="4.3" fill="#fff"/><circle cx="12.3" cy="14.4" r="3.4" fill="none" stroke="#5e5e5e" stroke-width="1.2"/><path d="M10 16.7l4.6-4.6" stroke="#5e5e5e" stroke-width="1.2"/></svg>
<div class="t" style="left:103.63px;top:847px;letter-spacing:0.514px">.gitignore</div>
<svg class="a" style="left:82px;top:869px" width="19" height="20" viewBox="0 0 19 20" ><path d="M9 1H15V10H3V7H9z" fill="#a9b3ba"/><path d="M3 5.8L7.8 1V5.8z" fill="#a9b3ba"/><rect x="0" y="11" width="19" height="9" fill="#76c9e8"/><path d="M2.5 18.5v-5.5l2.2 3 2.2-3v5.5M9.5 13v5.5h1.8c2 0 3.2-1 3.2-2.75s-1.2-2.75-3.2-2.75z" stroke="#3d5566" stroke-width="1.3" fill="none"/></svg>
<div class="t" style="left:103.77px;top:871px;letter-spacing:-0.465px">HELP.md</div>
<svg class="a" style="left:83px;top:897px" width="16" height="13" viewBox="0 0 16 13" ><rect x="0.7" y="0.3" width="14.6" height="11.7" fill="#a9b3ba"/><path d="M5.5 3l3.3 3.2-3.3 3.2" stroke="#fff" stroke-width="1.8" fill="none"/></svg>
<div class="t" style="left:104.00px;top:895px;letter-spacing:0.463px">mvnw</div>
<div class="a" style="left:254px;top:504px;width:149px;height:31px;border:3px solid #ee2b2e"></div>
<div class="a" style="left:469px;top:124px;width:13px;height:708px;background:rgba(0,0,0,0.125);"></div>
<div class="a" style="left:28px;top:917px;width:455px;height:1px;background:#c9c9c9;"></div>
<div class="a" style="left:483px;top:89px;width:1409px;height:33px;background:#f2f2f2;"></div>
<div class="a" style="left:483px;top:122px;width:1409px;height:1px;background:#c9c9c9;"></div>
<div class="a" style="left:938px;top:89px;width:200px;height:33px;background:#fafafa;"></div>
<div class="a" style="left:938px;top:119px;width:200px;height:4px;background:#4083c9;"></div>
<svg class="a" style="left:494px;top:97px" width="19" height="19" viewBox="0 0 19 19" ><path d="M9 0H15V8.7H3V6H9z" fill="#a9b3ba"/><path d="M3 4.8L7.8 0V4.8z" fill="#a9b3ba"/><rect x="0" y="10" width="19" height="9" fill="#f28c60"/><path d="M6.2 12l-2.7 2.5 2.7 2.5M9.5 12l2.7 2.5-2.7 2.5" stroke="#5a3a2a" stroke-width="1.3" fill="none"/></svg>
<div class="t" style="left:515.44px;top:98px">UserMapper.xml</div>
<svg class="a" style="left:631px;top:101px" width="11" height="11" viewBox="0 0 11 11" ><path d="M1 1l9 9M10 1l-9 9" stroke="#b4b4b4" stroke-width="1.25"/></svg>
<svg class="a" style="left:662px;top:97px" width="18" height="18" viewBox="0 0 18 18" ><circle cx="9.0" cy="9.0" r="9.0" fill="#87cde8"/><path d="M11.9 6.5a3.8 3.8 0 1 0 0 5" stroke="#3b4a55" stroke-width="1.5" fill="none"/></svg>
<div class="t" style="left:683.34px;top:98px;letter-spacing:-0.537px">User.java</div>
<svg class="a" style="left:749px;top:101px" width="11" height="11" viewBox="0 0 11 11" ><path d="M1 1l9 9M10 1l-9 9" stroke="#b4b4b4" stroke-width="1.25"/></svg>
<svg class="a" style="left:780px;top:97px" width="18" height="18" viewBox="0 0 18 18" ><circle cx="9.0" cy="9.0" r="9.0" fill="#9fd08f"/><path d="M6.8 5.4h4.4M9.0 5.4v7.2M6.8 12.6h4.4" stroke="#3b4550" stroke-width="1.5" fill="none"/></svg>
<div class="t" style="left:800.32px;top:98px;letter-spacing:-0.397px">IUserService.java</div>
<svg class="a" style="left:918px;top:101px" width="11" height="11" viewBox="0 0 11 11" ><path d="M1 1l9 9M10 1l-9 9" stroke="#b4b4b4" stroke-width="1.25"/></svg>
<svg class="a" style="left:949px;top:97px" width="18" height="18" viewBox="0 0 18 18" ><circle cx="9.0" cy="9.0" r="9.0" fill="#87cde8"/><path d="M11.9 6.5a3.8 3.8 0 1 0 0 5" stroke="#3b4a55" stroke-width="1.5" fill="none"/></svg>
<div class="t" style="left:969.52px;top:98px;letter-spacing:-0.250px">IUserServiceImpl.java</div>
<svg class="a" style="left:1117px;top:101px" width="11" height="11" viewBox="0 0 11 11" ><path d="M1 1l9 9M10 1l-9 9" stroke="#b4b4b4" stroke-width="1.25"/></svg>
<div class="a" style="left:483px;top:123px;width:1409px;height:768px;background:#fff;"></div>
<div class="a" style="left:483px;top:123px;width:86px;height:768px;background:#f0f0f0;"></div>
<div class="a" style="left:569px;top:123px;width:1px;height:768px;background:#d3d3d3;"></div>
<div class="a" style="left:483px;top:891px;width:1409px;height:1px;background:#d6d6d6;"></div>
<div class="a" style="left:483px;top:892px;width:1409px;height:25px;background:#efefef;"></div>
<div class="a" style="left:483px;top:917px;width:1409px;height:1px;background:#c9c9c9;"></div>
<div class="a" style="left:483px;top:284px;width:1290px;height:23px;background:#fffae3;"></div>
<div class="a" style="left:569px;top:284px;width:1px;height:23px;background:#d3d3d3;"></div>
<div class="a" style="left:1537px;top:123px;width:1px;height:768px;background:#e3e3e3;"></div>
<div class="a" style="left:1537px;top:284px;width:1px;height:23px;background:#ece6d0;"></div>
<div class="a" style="left:577px;top:286px;width:3px;height:19px;background:#000;"></div>
<div class="a" style="left:609px;top:353px;width:80px;height:23px;background:#f6ecbf;"></div>
<div class="a" style="left:825px;top:445px;width:24px;height:23px;background:#e9f4e6;"></div>
<div class="a" style="left:1089px;top:445px;width:16px;height:23px;background:#e9f4e6;"></div>
<div class="t ln" style="left:465px;width:40px;text-align:right;top:125px;line-height:23px">1</div>
<div class="t code" style="left:577px;top:125px;line-height:23px"><span class="kw">package</span> com.xys.springnew.service.impl;</div>
<div class="t ln" style="left:465px;width:40px;text-align:right;top:148px;line-height:23px">2</div>
<div class="t ln" style="left:465px;width:40px;text-align:right;top:171px;line-height:23px">3</div>
<div class="t code" style="left:577px;top:171px;line-height:23px"><span class="kw">import</span> com.xys.springnew.entity.User;</div>
<div class="t ln" style="left:465px;width:40px;text-align:right;top:194px;line-height:23px">4</div>
<div class="t code" style="left:577px;top:194px;line-height:23px"><span class="kw">import</span> com.xys.springnew.mapper.UserMapper;</div>
<div class="t ln" style="left:465px;width:40px;text-align:right;top:217px;line-height:23px">5</div>
<div class="t code" style="left:577px;top:217px;line-height:23px"><span class="kw">import</span> com.xys.springnew.service.IUserService;</div>
<div class="t ln" style="left:465px;width:40px;text-align:right;top:240px;line-height:23px">6</div>
<div class="t code" style="left:577px;top:240px;line-height:23px"><span class="kw">import</span> org.springframework.beans.factory.annotation.<span class="an">Autowired</span>;</div>
<div class="t ln" style="left:465px;width:40px;text-align:right;top:263px;line-height:23px">7</div>
<div class="t code" style="left:577px;top:263px;line-height:23px"><span class="kw">import</span> org.springframework.stereotype.<span class="an">Service</span>;</div>
<div class="t ln" style="left:465px;width:40px;text-align:right;top:286px;line-height:23px">8</div>
<div class="t ln" style="left:465px;width:40px;text-align:right;top:309px;line-height:23px">9</div>
<div class="t code" style="left:577px;top:309px;line-height:23px"><span class="an">@Service</span></div>
<div class="t ln" style="left:465px;width:40px;text-align:right;top:332px;line-height:23px">10</div>
<div class="t code" style="left:577px;top:332px;line-height:23px"><span class="kw">public</span> <span class="kw">class</span> IUserServiceImpl <span class="kw">implements</span> IUserService {</div>
<div class="t ln" style="left:465px;width:40px;text-align:right;top:355px;line-height:23px">11</div>
<div class="t code" style="left:577px;top:355px;line-height:23px">    <span class="an">@Autowired</span></div>
<div class="t ln" style="left:465px;width:40px;text-align:right;top:378px;line-height:23px">12</div>
<div class="t code" style="left:577px;top:378px;line-height:23px">    <span class="kw">private</span> UserMapper <span class="fd">userMapper</span>;</div>
<div class="t ln" style="left:465px;width:40px;text-align:right;top:401px;line-height:23px">13</div>
<div class="t ln" style="left:465px;width:40px;text-align:right;top:424px;line-height:23px">14</div>
<div class="t code" style="left:577px;top:424px;line-height:23px">    <span class="an">@Override</span></div>
<div class="t ln" style="left:465px;width:40px;text-align:right;top:447px;line-height:23px">15</div>
<div class="t code" style="left:577px;top:447px;line-height:23px">    <span class="kw">public</span> User getById(<span class="kw">int</span> id) <span style="color:#5a5a5a">{</span> <span class="kw">return</span> <span class="fd">userMapper</span>.getById(id); <span style="color:#5a5a5a">}</span></div>
<div class="t ln" style="left:465px;width:40px;text-align:right;top:470px;line-height:23px">18</div>
<div class="t code" style="left:577px;top:470px;line-height:23px">}</div>
<div class="t ln" style="left:465px;width:40px;text-align:right;top:493px;line-height:23px">19</div>
<svg class="a" style="left:564px;top:175px" width="11" height="13" viewBox="0 0 11 13" ><path d="M0.5 0.5h10v7l-5 5-5-5z" fill="#fff" stroke="#c8c8c8"/><path d="M3 5h5" stroke="#b0b0b0"/></svg>
<svg class="a" style="left:564px;top:265px" width="11" height="13" viewBox="0 0 11 13" ><path d="M0.5 12.5h10v-7l-5-5-5 5z" fill="#fff" stroke="#c8c8c8"/><path d="M3 8h5" stroke="#b0b0b0"/></svg>
<svg class="a" style="left:564px;top:452px" width="11" height="11" viewBox="0 0 11 11" ><rect x="0.5" y="0.5" width="10" height="10" fill="#fff" stroke="#c8c8c8"/><path d="M2.5 5.5h6M5.5 2.5v6" stroke="#b0b0b0"/></svg>
<svg class="a" style="left:513px;top:311px" width="16" height="16" viewBox="0 0 16 16" ><circle cx="7.5" cy="8" r="7.5" fill="#8ac97b"/><path d="M1.5 3.5l11 11" stroke="#f0f0f0" stroke-width="1.6"/><path d="M9 3.5l2 2 4-4.5" stroke="#f0f0f0" stroke-width="3" fill="none"/><path d="M9 3.5l2 2 4-4.5" stroke="#505050" stroke-width="1.6" fill="none"/></svg>
<svg class="a" style="left:513px;top:334px" width="16" height="16" viewBox="0 0 16 16" ><circle cx="7.5" cy="8" r="7.5" fill="#8ac97b"/><path d="M1.5 3.5l11 11" stroke="#f0f0f0" stroke-width="1.6"/><circle cx="11" cy="11.5" r="4.5" fill="#87cde8" stroke="#f0f0f0" stroke-width="0.8"/><path d="M12.3 10.2a1.7 1.7 0 1 0 0 2.6" stroke="#3b4550" stroke-width="0.9" fill="none"/></svg>
<svg class="a" style="left:513px;top:380px" width="16" height="16" viewBox="0 0 16 16" ><circle cx="7.5" cy="8" r="7.5" fill="#8ac97b"/><path d="M1.5 3.5l11 11" stroke="#f0f0f0" stroke-width="1.6"/><path d="M8 12.5h4v-2.5l3.8 3.3-3.8 3.3v-2.5h-4z" fill="#9aa7b0" stroke="#f0f0f0" stroke-width="0.6"/></svg>
<svg class="a" style="left:531px;top:376px" width="22" height="21" viewBox="0 0 22 21" ><path d="M5 7c4-1 9-1 16 0l-1 12c-5-1-10-1-15 0z" fill="#2f62c4"/><circle cx="12.5" cy="13" r="4" fill="none" stroke="#9bb7ea" stroke-width="1"/><path d="M2 18l9-13" stroke="#e8b82a" stroke-width="2.2"/><path d="M7 3l6-2 2 3-3 2z" fill="#777"/></svg>
<svg class="a" style="left:512px;top:448px" width="18" height="17" viewBox="0 0 18 17" ><circle cx="5.5" cy="8.5" r="5" fill="#8ac97b"/><path d="M4.2 6h2.6M5.5 6v5M4.2 11h2.6" stroke="#333" stroke-width="1.1"/><path d="M13 16v-12" stroke="#e25b60" stroke-width="1.6"/><path d="M9.5 6l3.5-5 3.5 5z" fill="#e25b60"/></svg>
<div class="a" style="left:1758px;top:126px;width:13px;height:13px;background:#eac400;"></div>
<div class="a" style="left:1755px;top:374px;width:18px;height:3px;background:#eac400;"></div>
<div class="a" style="left:1773px;top:123px;width:119px;height:54px;background:#ebebeb;"></div>
<div class="a" style="left:1774px;top:127.5px;width:7px;height:1.2px;background:#9b9bcf;"></div>
<div class="a" style="left:1782px;top:127.5px;width:31px;height:1.2px;background:#999;"></div>
<div class="a" style="left:1774px;top:133.5px;width:6px;height:1.2px;background:#9b9bcf;"></div>
<div class="a" style="left:1781px;top:133.5px;width:30px;height:1.2px;background:#999;"></div>
<div class="a" style="left:1774px;top:136.5px;width:6px;height:1.2px;background:#9b9bcf;"></div>
<div class="a" style="left:1781px;top:136.5px;width:36px;height:1.2px;background:#999;"></div>
<div class="a" style="left:1774px;top:139.5px;width:6px;height:1.2px;background:#9b9bcf;"></div>
<div class="a" style="left:1781px;top:139.5px;width:39px;height:1.2px;background:#999;"></div>
<div class="a" style="left:1774px;top:142.5px;width:6px;height:1.2px;background:#9b9bcf;"></div>
<div class="a" style="left:1781px;top:142.5px;width:55px;height:1.2px;background:#999;"></div>
<div class="a" style="left:1774px;top:145.5px;width:6px;height:1.2px;background:#9b9bcf;"></div>
<div class="a" style="left:1781px;top:145.5px;width:39px;height:1.2px;background:#999;"></div>
<div class="a" style="left:1774px;top:151.5px;width:8px;height:1.2px;background:#999;"></div>
<div class="a" style="left:1774px;top:154.5px;width:6px;height:1.2px;background:#9b9bcf;"></div>
<div class="a" style="left:1781px;top:154.5px;width:5px;height:1.2px;background:#9b9bcf;"></div>
<div class="a" style="left:1787px;top:154.5px;width:16px;height:1.2px;background:#999;"></div>
<div class="a" style="left:1804px;top:154.5px;width:10px;height:1.2px;background:#9b9bcf;"></div>
<div class="a" style="left:1815px;top:154.5px;width:12px;height:1.2px;background:#999;"></div>
<div class="a" style="left:1828px;top:154.5px;width:1px;height:1.2px;background:#999;"></div>
<div class="a" style="left:1778px;top:157.5px;width:10px;height:1.2px;background:#999;"></div>
<div class="a" style="left:1778px;top:160.5px;width:7px;height:1.2px;background:#9b9bcf;"></div>
<div class="a" style="left:1786px;top:160.5px;width:10px;height:1.2px;background:#999;"></div>
<div class="a" style="left:1797px;top:160.5px;width:11px;height:1.2px;background:#999;"></div>
<div class="a" style="left:1778px;top:166.5px;width:9px;height:1.2px;background:#999;"></div>
<div class="a" style="left:1778px;top:169.5px;width:6px;height:1.2px;background:#9b9bcf;"></div>
<div class="a" style="left:1785px;top:169.5px;width:4px;height:1.2px;background:#999;"></div>
<div class="a" style="left:1790px;top:169.5px;width:11px;height:1.2px;background:#999;"></div>
<div class="a" style="left:1801px;top:169.5px;width:3px;height:1.2px;background:#9b9bcf;"></div>
<div class="a" style="left:1805px;top:169.5px;width:3px;height:1.2px;background:#999;"></div>
<div class="a" style="left:1808px;top:169.5px;width:6px;height:1.2px;background:#9b9bcf;"></div>
<div class="a" style="left:1815px;top:169.5px;width:23px;height:1.2px;background:#999;"></div>
<div class="a" style="left:1774px;top:172.5px;width:1px;height:1.2px;background:#999;"></div>
<div class="a" style="left:28px;top:918px;width:1864px;height:33px;background:#f2f2f2;"></div>
<div class="a" style="left:28px;top:951px;width:1864px;height:1px;background:#c9c9c9;"></div>
<div class="a" style="left:93px;top:948px;width:224px;height:3px;background:#a7b3c6;"></div>
<div class="t" style="left:33.97px;top:928px;letter-spacing:0.646px">Debug:</div>
<svg class="a" style="left:109px;top:927px" width="22" height="21" viewBox="0 0 22 21" ><path d="M2 13.5C0.5 9 4 6 9 5.5L13 4.5C15 3.8 16.5 2.5 17.5 1L18 8H9C8 10 7.5 13 5.5 14.5 4 15.5 2.5 15 2 13.5z" fill="#8cc97c"/><path d="M4.5 16.3h3.5" stroke="#8cc97c" stroke-width="1.2"/><path d="M7.00 14.00L10.25 8.00H16.75L20.00 14.00L16.75 20.00H10.25z" fill="#f2f2f2"/><path d="M8.00 14.00L10.75 9.00H16.25L19.00 14.00L16.25 19.00H10.75z" fill="#9aa5ad"/><circle cx="13.5" cy="14.3" r="2.97" fill="none" stroke="#e8ecef" stroke-width="1.3"/><path d="M13.5 10.03v4.17" stroke="#9aa5ad" stroke-width="1.8"/><path d="M13.5 10.83v2.97" stroke="#e8ecef" stroke-width="1.2"/><circle cx="17.5" cy="17.5" r="3.2" fill="#18c918" stroke="#f2f2f2" stroke-width="0.8"/></svg>
<div class="t" style="left:131.52px;top:928px;letter-spacing:0.316px">SpringNewApplication</div>
<svg class="a" style="left:293px;top:930px" width="11" height="11" viewBox="0 0 11 11" ><path d="M1 1l9 9M10 1l-9 9" stroke="#adadad" stroke-width="1.4"/></svg>
<svg class="a" style="left:1833px;top:927px" width="16" height="16" viewBox="0 0 18 18" ><path d="M9 0.5l1.3 0 .6 2.4 1.7.7 2.1-1.3 1.8 1.8-1.3 2.1.7 1.7 2.4.6v2.6l-2.4.6-.7 1.7 1.3 2.1-1.8 1.8-2.1-1.3-1.7.7-.6 2.4h-2.6l-.6-2.4-1.7-.7-2.1 1.3-1.8-1.8 1.3-2.1-.7-1.7-2.4-.6v-2.6l2.4-.6.7-1.7-1.3-2.1 1.8-1.8 2.1 1.3 1.7-.7.6-2.4z" fill="#6e6e6e"/><circle cx="9" cy="9" r="3" fill="#f2f2f2"/></svg>
<div class="a" style="left:1867px;top:934px;width:16px;height:2px;background:#6e6e6e;"></div>
<div class="a" style="left:28px;top:952px;width:1864px;height:32px;background:#f2f2f2;"></div>
<div class="a" style="left:28px;top:984px;width:1864px;height:1px;background:#c9c9c9;"></div>
<div class="a" style="left:64px;top:952px;width:1px;height:32px;background:#c9c9c9;"></div>
<div class="t" style="left:42.00px;top:965px;font-size:13px;color:#777">››</div>
<div class="t" style="left:79.17px;top:962px;color:#333;letter-spacing:-0.629px">Debugger</div>
<svg class="a" style="left:172px;top:963px" width="16" height="13" viewBox="0 0 16 13" ><rect x="0" y="0" width="15" height="12.5" fill="#6e6e6e"/><path d="M5 3l3.5 3.2-3.5 3.2" stroke="#fff" stroke-width="1.6" fill="none"/></svg>
<div class="t" style="left:192.44px;top:962px;letter-spacing:-0.934px">Console</div>
<svg class="a" style="left:266px;top:959px" width="20" height="20" viewBox="0 0 20 20" ><path d="M10 3l-6 13M10 3l5 8M15 11l-1 6" stroke="#f0a27a" stroke-width="1.8" fill="none"/><circle cx="10" cy="3.5" r="3" fill="#f0a27a"/><circle cx="4" cy="16.5" r="3" fill="#f0a27a"/><circle cx="15" cy="16.5" r="3" fill="#f0a27a"/></svg>
<div class="t" style="left:287.97px;top:962px;letter-spacing:-0.618px">Endpoints</div>
<svg class="a" style="left:368px;top:961px" width="16" height="14" viewBox="0 0 16 14" ><path d="M0 1.5h16M0 7h16M0 12.5h16" stroke="#b0b0b0" stroke-width="2.4"/></svg>
<div class="a" style="left:397px;top:956px;width:1px;height:22px;background:#c9c9c9;"></div>
<svg class="a" style="left:411px;top:959px" width="17" height="16" viewBox="0 0 17 16" ><path d="M1 8l4-4 6 5" stroke="#b4b4b4" stroke-width="1.8" fill="none"/><path d="M9 6h6v5z" fill="#b4b4b4"/><rect x="1" y="13" width="15" height="2.2" fill="#b4b4b4"/></svg>
<svg class="a" style="left:446px;top:959px" width="16" height="16" viewBox="0 0 16 16" ><path d="M8 1v8" stroke="#b4b4b4" stroke-width="2"/><path d="M3.5 6.5h9l-4.5 4.5z" fill="#b4b4b4"/><rect x="1" y="13" width="14" height="2.2" fill="#b4b4b4"/></svg>
<svg class="a" style="left:480px;top:959px" width="16" height="16" viewBox="0 0 16 16" ><path d="M8 1v8" stroke="#b4b4b4" stroke-width="2"/><path d="M3.5 6.5h9l-4.5 4.5z" fill="#b4b4b4"/><rect x="1" y="13" width="14" height="2.2" fill="#b4b4b4"/></svg>
<svg class="a" style="left:514px;top:959px" width="16" height="16" viewBox="0 0 16 16" ><path d="M8 4v8" stroke="#b4b4b4" stroke-width="2"/><path d="M3.5 6.5h9l-4.5-4.5z" fill="#b4b4b4"/><rect x="1" y="13" width="14" height="2.2" fill="#b4b4b4"/></svg>
<svg class="a" style="left:548px;top:959px" width="16" height="16" viewBox="0 0 16 16" ><path d="M1 1l6 6M7 1l-6 6" stroke="#b4b4b4" stroke-width="1.6"/><path d="M6 6h8v8h-8z" fill="none" stroke="#b4b4b4" stroke-width="1.8"/></svg>
<svg class="a" style="left:582px;top:959px" width="18" height="18" viewBox="0 0 18 18" ><path d="M1 1l7 5.5" stroke="#b4b4b4" stroke-width="1.8"/><path d="M4 7h6v-6z" fill="#b4b4b4"/><path d="M12 8h4M14 8v8M12 16h4" stroke="#b4b4b4" stroke-width="1.2"/></svg>
<div class="a" style="left:611px;top:956px;width:1px;height:22px;background:#c9c9c9;"></div>
<svg class="a" style="left:626px;top:959px" width="16" height="16" viewBox="0 0 16 16" ><rect x="1" y="1" width="14" height="14" fill="none" stroke="#b4b4b4" stroke-width="2"/><rect x="1" y="1" width="14" height="4" fill="#b4b4b4"/><path d="M4 8h2M7 8h2M10 8h2M4 11h2M7 11h2M10 11h2" stroke="#b4b4b4" stroke-width="1.6"/></svg>
<svg class="a" style="left:660px;top:959px" width="16" height="16" viewBox="0 0 16 16" ><path d="M0 2h6M9 2h7M0 7h4M8 7h8M0 12.5h6M9 12.5h7M11 0l-5 15" stroke="#b4b4b4" stroke-width="1.8"/></svg>
<svg class="a" style="left:1866px;top:960px" width="20" height="19" viewBox="0 0 20 19" ><rect x="0" y="0" width="8.5" height="7" fill="#6e6e6e"/><rect x="10" y="0" width="8.5" height="7" fill="#6e6e6e"/><rect x="0" y="8.5" width="18.5" height="6" fill="#6e6e6e"/><path d="M13 15h7l-3.5 3.5z" fill="#333"/></svg>
<div class="a" style="left:0px;top:985px;width:1920px;height:27px;background:#f2f2f2;"></div>
<div class="a" style="left:0px;top:984px;width:27px;height:1px;background:#c9c9c9;"></div>
<div class="a" style="left:0px;top:1012px;width:1920px;height:1px;background:#c9c9c9;"></div>
<div class="a" style="left:27px;top:985px;width:101px;height:27px;background:#bdbdbd;"></div>
<svg class="a" style="left:40px;top:990px" width="17" height="18" viewBox="0 0 17 18" ><g fill="#6e6e6e"><ellipse cx="7.5" cy="10" rx="5" ry="6"/><rect x="4" y="2" width="7" height="3.5" rx="1.5"/><path d="M0 6.5h3v1.4h-3zM0 10.5h3v1.4h-3zM0 14.5h3v1.4h-3zM12 6.5h3v1.4h-3zM12 10.5h3v1.4h-3zM12 14.5h3v1.4h-3z"/></g><circle cx="13" cy="15" r="3" fill="#18c918"/></svg>
<div class="t" style="left:58.60px;top:992px;letter-spacing:-0.602px"><u>5</u>: Debug</div>
<svg class="a" style="left:142px;top:993px" width="13" height="12" viewBox="0 0 13 12" ><path d="M0 1h2.5M4 1h9M0 5.5h2.5M4 5.5h9M0 10h2.5M4 10h9" stroke="#6e6e6e" stroke-width="1.8"/></svg>
<div class="t" style="left:159.24px;top:992px;letter-spacing:-0.905px"><u>6</u>: TODO</div>
<svg class="a" style="left:240px;top:991px" width="16" height="15" viewBox="0 0 16 15" ><path d="M8 0.5l7.5 14h-15z" fill="#6e6e6e"/><path d="M8 5v5" stroke="#f2f2f2" stroke-width="1.8"/><rect x="7.1" y="11.2" width="1.8" height="1.8" fill="#f2f2f2"/></svg>
<div class="t" style="left:259.07px;top:992px;letter-spacing:-0.769px">Problems</div>
<svg class="a" style="left:341px;top:991px" width="16" height="14" viewBox="0 0 16 14" ><path d="M1 13c-1-6 3-11 14-12-1 7-4 11-10 11.5-1.5.2-3 .5-4 .5z" fill="#6e6e6e"/><path d="M1 13c3-3 6-5 9-7" stroke="#f2f2f2" stroke-width="1"/></svg>
<div class="t" style="left:360.52px;top:992px;letter-spacing:-0.442px">Spring</div>
<svg class="a" style="left:426px;top:991px" width="14" height="14" viewBox="0 0 14 14" ><rect x="0" y="0" width="14" height="13" fill="#6e6e6e"/><path d="M3 3l3 2.5-3 2.5M7 10h4" stroke="#f2f2f2" stroke-width="1.4" fill="none"/></svg>
<div class="t" style="left:445.06px;top:992px;letter-spacing:-0.815px">Terminal</div>
<svg class="a" style="left:520px;top:990px" width="18" height="18" viewBox="0 0 18 18" ><path d="M2 5.5l5-4.5 2.5 2-2 2 8 9-2.3 2-7.7-9.2-1.5 1.3z" fill="#6e6e6e"/></svg>
<div class="t" style="left:540.07px;top:992px;letter-spacing:-0.489px">Build</div>
<svg class="a" style="left:598px;top:991px" width="17" height="16" viewBox="0 0 17 16" ><rect x="0" y="0" width="13" height="13" fill="#6e6e6e"/><rect x="6" y="6" width="10" height="9.5" fill="#f2f2f2"/><rect x="7" y="7" width="9" height="8.5" fill="#6e6e6e"/><path d="M8.5 9h2.3M8.5 11.2h2.3M8.5 13.4h2.3M12.3 9h2.3M12.3 11.2h2.3M12.3 13.4h2.3" stroke="#f2f2f2" stroke-width="0.9"/></svg>
<div class="t" style="left:617.27px;top:992px;letter-spacing:-0.858px">Java Enterprise</div>
<svg class="a" style="left:1798px;top:991px" width="17" height="17" viewBox="0 0 17 17" ><path d="M8 0.5a7.5 7.5 0 1 0 0 15h8v-8a7.5 7.5 0 0 0-8-7z" fill="#59a869"/><path d="M6 5l2.5-1.5v8" stroke="#fff" stroke-width="1.8" fill="none"/></svg>
<div class="t" style="left:1816.77px;top:992px;letter-spacing:-0.569px">Event Log</div>
<div class="a" style="left:0px;top:1013px;width:1920px;height:22px;background:#f2f2f2;"></div>
<svg class="a" style="left:6px;top:1015px" width="18" height="18" viewBox="0 0 18 18" ><path d="M2 4v12.5h12.5" stroke="#8a8a8a" stroke-width="1.5" fill="none"/><rect x="4.8" y="2.2" width="11" height="11.5" fill="#f2f2f2" stroke="#6e6e6e" stroke-width="1.5"/></svg>
<div class="t" style="left:31.97px;top:1016px">Build completed successfully in 1 s 119 ms (6 minutes ago)</div>
<div class="t" style="left:1651.35px;top:1016px;letter-spacing:-0.484px">8:1</div>
<div class="t" style="left:1686.24px;top:1016px;letter-spacing:-2.003px">CRLF</div>
<div class="t" style="left:1733.84px;top:1016px;letter-spacing:-0.472px">UTF-8</div>
<div class="t" style="left:1789.50px;top:1016px">4 spaces</div>
<div class="a" style="left:1821px;top:1021px;width:95px;height:10px;background:#fff;border-radius:5px;box-shadow:0 0 2px 1.5px rgba(0,0,0,0.55)"></div>
<div class="a" style="left:1826px;top:1024px;width:24px;height:4px;background:#454545;border-radius:2px"></div>
<div class="a" style="left:1857px;top:1024px;width:9px;height:4px;background:#454545;border-radius:2px 0 0 2px"></div>
<div class="a" style="left:1865px;top:1027px;width:8px;height:1px;background:#666;"></div>
<div class="a" style="left:1873px;top:1024px;width:8px;height:4px;background:#454545;border-radius:0 2px 2px 0"></div>
<div class="a" style="left:1887px;top:1024px;width:9px;height:4px;background:#454545;border-radius:2px 0 0 2px"></div>
<div class="a" style="left:1902px;top:1024px;width:9px;height:4px;background:#454545;border-radius:0 2px 2px 0"></div>
<svg class="a" style="left:1859px;top:1014px" width="10" height="9" viewBox="0 0 10 9" ><path d="M1.2 8V5a3.8 3.8 0 0 1 7.6 0V8" stroke="#4a4a4a" stroke-width="1.8" fill="none"/></svg>
<svg class="a" style="left:1891px;top:1013px" width="16" height="9" viewBox="0 0 16 9" ><path d="M3 8V4a3 3 0 0 1 3-3h4a3 3 0 0 1 3 3v4z" fill="#555"/><path d="M0.5 8h15" stroke="#555" stroke-width="1.5"/></svg>
<div class="a" style="left:0px;top:1034px;width:1920px;height:9px;background:linear-gradient(180deg,#6f8094 0%,#34485e 25%,#22324a 100%);"></div>
<div class="a" style="left:0px;top:1035px;width:58px;height:8px;background:linear-gradient(180deg,#2a3848,#1b2633);"></div>
<div class="a" style="left:18px;top:1038px;width:22px;height:5px;background:rgba(180,200,220,0.5);border-radius:11px 11px 0 0"></div>
<div class="a" style="left:60px;top:1035px;width:60px;height:8px;background:linear-gradient(180deg,#eef3f8,#c9d6e4);border:1px solid #55667a;border-bottom:none;border-radius:3px 3px 0 0"></div>
<div class="a" style="left:127px;top:1035px;width:61px;height:8px;background:linear-gradient(180deg,#eef3f8,#c9d6e4);border:1px solid #55667a;border-bottom:none;border-radius:3px 3px 0 0"></div>
<div class="a" style="left:195px;top:1035px;width:65px;height:8px;background:linear-gradient(180deg,#eef3f8,#c9d6e4);border:1px solid #55667a;border-bottom:none;border-radius:3px 3px 0 0"></div>
<div class="a" style="left:263px;top:1035px;width:66px;height:8px;background:linear-gradient(180deg,#eef3f8,#c9d6e4);border:1px solid #55667a;border-bottom:none;border-radius:3px 3px 0 0"></div>
<div class="a" style="left:332px;top:1035px;width:65px;height:8px;background:linear-gradient(180deg,#eef3f8,#c9d6e4);border:1px solid #55667a;border-bottom:none;border-radius:3px 3px 0 0"></div>
<div class="a" style="left:397px;top:1035px;width:93px;height:8px;background:linear-gradient(180deg,#b7c9dc,#8ea6c0);"></div>
<div class="a" style="left:76px;top:1038px;width:26px;height:5px;background:#d54a3c;border-radius:13px 13px 0 0"></div>
<div class="a" style="left:140px;top:1037px;width:14px;height:6px;background:#e83a6a;transform:skewX(-10deg)"></div>
<div class="a" style="left:156px;top:1038px;width:14px;height:5px;background:#5856d6;border-radius:7px 7px 0 0"></div>
<div class="a" style="left:214px;top:1038px;width:28px;height:5px;background:#4caf50;border-radius:14px 14px 0 0"></div>
<div class="a" style="left:282px;top:1038px;width:24px;height:5px;background:#f57c1f;border-radius:12px 12px 0 0"></div>
<div class="a" style="left:344px;top:1038px;width:28px;height:5px;background:#f6913a;border-radius:14px 14px 0 0"></div>
<div class="a" style="left:1906px;top:1035px;width:14px;height:8px;background:linear-gradient(180deg,#8f9fb0,#4c5e72);border-left:1px solid #aab6c4"></div>
<div class="a" style="left:1770px;top:1040px;width:5px;height:3px;background:#e8eef4;"></div>
<div class="a" style="left:1778px;top:1040px;width:5px;height:3px;background:#e8eef4;"></div>
<div class="a" style="left:1790px;top:1040px;width:5px;height:3px;background:#e8eef4;"></div>
<div class="a" style="left:1798px;top:1040px;width:5px;height:3px;background:#e8eef4;"></div>
</body></html>
